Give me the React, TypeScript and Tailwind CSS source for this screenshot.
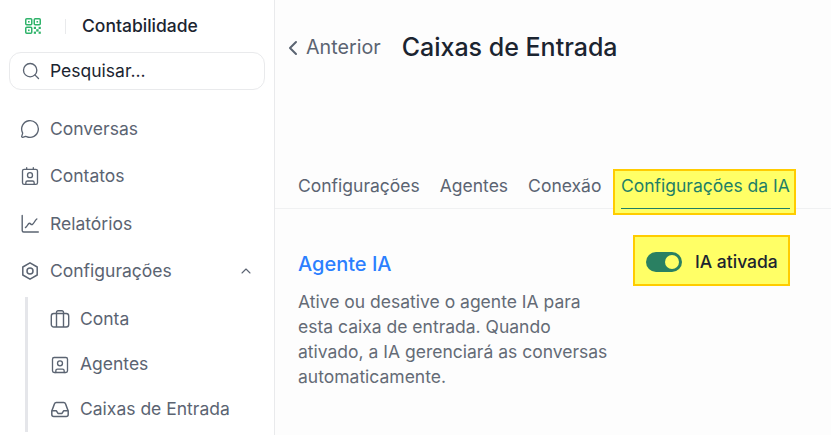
import { ChevronLeft, ChevronUp, Contact, MessageCircle, Search, SquareUser } from "lucide-react";
import type { ReactNode } from "react";

const Qr = () => (
  <svg width="16" height="16" viewBox="0 0 16 16" fill="none" className="shrink-0 text-[#2fb36a]">
    <g stroke="currentColor" strokeWidth="1.5">
      <rect x="0.75" y="0.75" width="6" height="6" rx="1" />
      <rect x="9.25" y="0.75" width="6" height="6" rx="1" />
      <rect x="0.75" y="9.25" width="6" height="6" rx="1" />
    </g>
    <g fill="currentColor">
      <rect x="3" y="3" width="1.6" height="1.6" />
      <rect x="11.5" y="3" width="1.6" height="1.6" />
      <rect x="3" y="11.5" width="1.6" height="1.6" />
      <rect x="8.8" y="8.8" width="2.2" height="2.2" />
      <rect x="13.6" y="8.8" width="2.2" height="2.2" />
      <rect x="11.2" y="11.2" width="2.4" height="2.4" />
      <rect x="8.8" y="13.6" width="2.2" height="2.2" />
      <rect x="13.6" y="13.6" width="2.2" height="2.2" />
    </g>
  </svg>
);

const Hex = () => (
  <svg width="20" height="20" viewBox="0 0 20 20" fill="none" stroke="currentColor" strokeWidth="1.5" strokeLinejoin="round">
    <path d="M10 1.8 17.2 6v8L10 18.2 2.8 14V6z" />
    <circle cx="10" cy="10" r="3" />
  </svg>
);

const Chart = () => (
  <svg width="20" height="20" viewBox="0 0 20 20" fill="none" stroke="currentColor" strokeWidth="1.4" strokeLinecap="round" strokeLinejoin="round">
    <path d="M2.2 1.5v15a1.5 1.5 0 0 0 1.5 1.5h14.6" />
    <path d="M5.5 13.5c1.8-.6 2.3-4.3 4-4.3 1.4 0 1.2 2 2.8 1.3 1.800-.8 2.300-4 4.500-5.500" />
  </svg>
);

const Case = () => (
  <svg width="20" height="20" viewBox="0 0 20 20" fill="none" stroke="currentColor" strokeWidth="1.4" strokeLinejoin="round">
    <rect x="1.3" y="3.500" width="17.400" height="13.500" rx="2.500" />
    <path d="M6.500 17V2.300A1.500 1.500 0 0 1 8 .8h4a1.500 1.500 0 0 1 1.500 1.500V17" />
  </svg>
);

const Tray = () => (
  <svg width="20" height="20" viewBox="0 0 20 20" fill="none" stroke="currentColor" strokeWidth="1.5" strokeLinejoin="round">
    <path d="M1.800 11 4.600 3.600Q5 2.400 6.300 2.400h7.400q1.300 0 1.700 1.200L18.200 11v3.400a2 2 0 0 1-2 2H3.800a2 2 0 0 1-2-2Z" />
    <path d="M1.800 10.800h4.600l1.600 2.600h4l1.600-2.600h4.600" />
  </svg>
);

function Nav({ icon, label, extra }: { icon: ReactNode; label: string; extra?: ReactNode }) {
  return (
    <div className="flex h-[47.5px] items-center gap-[10px] pl-5 pr-5 text-[#5b6472]">
      <span className="flex w-5 shrink-0 justify-center">{icon}</span>
      <span className="text-[17.5px]">{label}</span>
      {extra}
    </div>
  );
}

function Sub({ icon, label }: { icon: ReactNode; label: string }) {
  return (
    <div className="flex h-[45px] items-center gap-[10px] pl-[22px] text-[#5b6472]">
      <span className="flex w-5 shrink-0 justify-center">{icon}</span>
      <span className="text-[17.5px]">{label}</span>
    </div>
  );
}

export default function App() {
  return (
    <div className="flex h-[435px] w-[831px] overflow-hidden bg-[#fdfdfd] font-['Inter',sans-serif] text-[#1b2430]">
      <aside className="h-full w-[275px] shrink-0 border-r border-[#e9eaec] bg-white">
        <div className="flex h-[52px] items-center pl-[25px]">
          <Qr />
          <span className="ml-6 h-[15px] w-px bg-[#e9eaec]" />
          <span className="ml-4 text-[17.5px] font-medium">Contabilidade</span>
        </div>
        <div className="mx-[9px] flex h-[38px] items-center gap-[9px] rounded-xl border border-[#e9eaec] pl-[11px]">
          <Search size={20} strokeWidth={1.6} className="text-[#5b6472]" />
          <span className="text-[17.5px]">Pesquisar...</span>
        </div>
        <div className="mt-[15px]">
          <Nav icon={<MessageCircle size={20} strokeWidth={1.6} />} label="Conversas" />
          <Nav icon={<Contact size={20} strokeWidth={1.6} />} label="Contatos" />
          <Nav icon={<Chart />} label="Relatórios" />
          <Nav icon={<Hex />} label="Configurações" extra={<ChevronUp size={16} strokeWidth={1.6} className="ml-auto" />} />
        </div>
        <div className="ml-[25px] mt-[3px] border-l-[3px] border-[#e5e6ea]">
          <div className="-mt-px">
            <Sub icon={<Case />} label="Conta" />
            <Sub icon={<SquareUser size={20} strokeWidth={1.6} />} label="Agentes" />
            <Sub icon={<Tray />} label="Caixas de Entrada" />
          </div>
        </div>
      </aside>
      <main className="min-w-0 flex-1">
        <div className="flex h-[95px] items-center pl-[6px]">
          <ChevronLeft size={24} strokeWidth={2} className="text-[#5b6472]" />
          <span className="ml-px text-[19.7px] text-[#5b6472]">Anterior</span>
          <h1 className="mb-[2px] ml-[21px] text-[25px] font-medium leading-8">Caixas de Entrada</h1>
        </div>
        <div className="mt-[74px] flex h-[40px] items-start border-b border-[#f0f1f2] pl-[23px] text-[17.5px] text-[#5b6472]">
          <span className="mt-[4px]">Configurações</span>
          <span className="ml-5 mt-[4px]">Agentes</span>
          <span className="ml-5 mt-[4px]">Conexão</span>
          <div className="ml-[11.5px] h-[46px] border-2 border-[#ffcc00] bg-[#ffff66] pl-[6px] pr-[4px]">
            <div className="h-[38px] whitespace-nowrap border-b border-[#1f7f66] pt-[2px] text-[#1f7f66]">Configurações da IA</div>
          </div>
        </div>
        <div className="flex items-start pl-[23px] pt-[26px]">
          <div className="w-[335px]">
            <h2 className="mt-[15px] text-[20px] font-medium leading-7 text-[#2b7fff]">Agente IA</h2>
            <p className="mt-[11px] max-w-[318px] text-[17.5px] leading-[25px] text-[#646b76]">
              Ative ou desative o agente IA para esta caixa de entrada. Quando ativado, a IA gerenciará as conversas automaticamente.
            </p>
          </div>
          <div className="flex h-[51px] w-[157px] items-center gap-[13px] border-2 border-[#ffcc00] bg-[#ffff66] pl-[11px] pt-[3px]">
            <span className="flex h-5 w-9 items-center justify-end rounded-full bg-[#2a8062] px-[3px]">
              <span className="h-[14px] w-[14px] rounded-full bg-[#ffff66]" />
            </span>
            <span className="text-[17.5px] font-medium">IA ativada</span>
          </div>
        </div>
      </main>
    </div>
  );
}
